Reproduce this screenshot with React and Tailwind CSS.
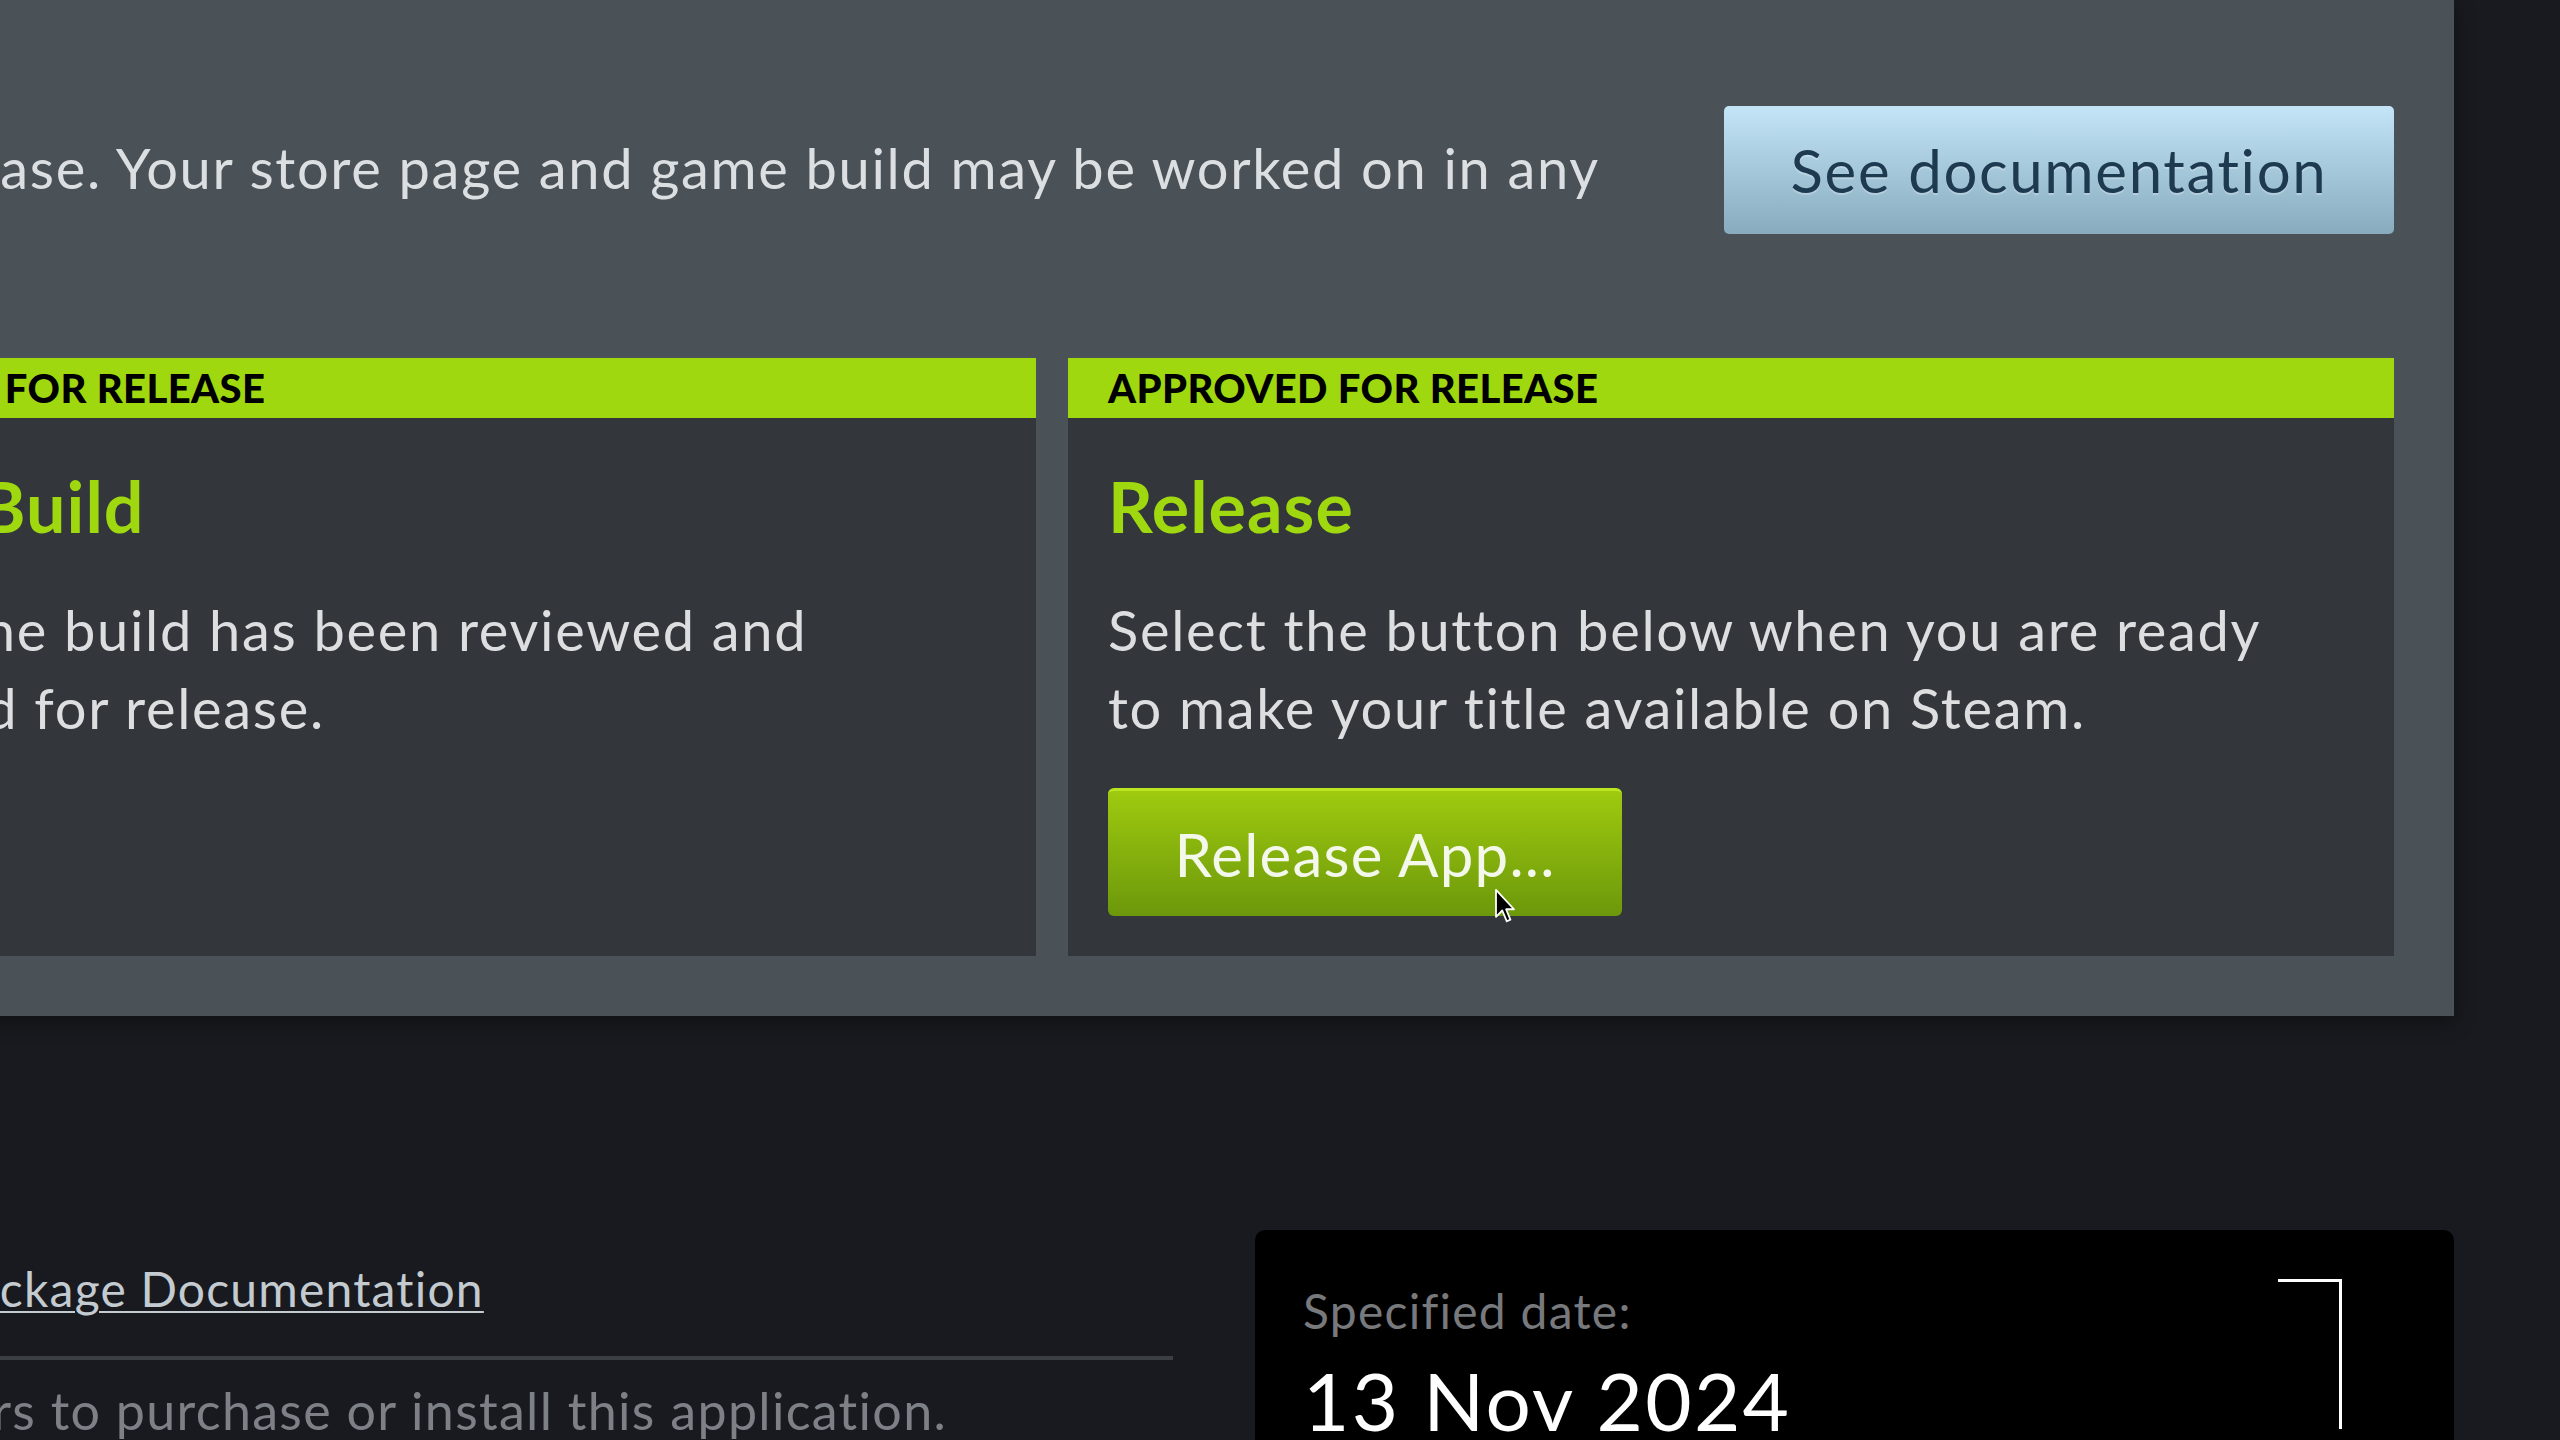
function Cursor() {
  return (
    <svg className="absolute left-[386px] top-[97px] w-[22px] h-[36px]" viewBox="0 0 12 20">
      <path d="M1 1 L1 16 L4.5 12.5 L7 18.5 L9 17.6 L6.6 11.8 L11 11.8 Z" fill="#000" stroke="#fff" strokeWidth="1" strokeLinejoin="round" />
    </svg>
  )
}

function StatusCard({ title, children, action }) {
  return (
    <div className="bg-[#33373b] flex flex-col">
      <div className="h-[60px] bg-[#9fd80f] px-[40px] flex items-center">
        <span className="text-[40px] leading-none font-black tracking-[0.01em] text-black">APPROVED FOR RELEASE</span>
      </div>
      <div className="px-[40px] pt-[46px] pb-[40px]">
        <h2 className="text-[70px] leading-[1.2] font-bold tracking-[0.015em] text-[#9fd80f]">{title}</h2>
        <p className="mt-[43px] max-w-[1180px] text-[56px] leading-[78px] tracking-[0.03em] text-[#dcdedf]">{children}</p>
        {action}
      </div>
    </div>
  )
}

export default function App() {
  return (
    <div className="w-[2560px] h-[1440px] overflow-hidden bg-[#181a1f] font-['Lato',sans-serif]">
      <div className="-ml-[325px] w-[2779px]">
        <section className="bg-[#4a5157] px-[60px] pt-[106px] pb-[60px] shadow-[0_6px_18px_rgba(0,0,0,0.35)]">
          <div className="flex items-start gap-[60px]">
            <p className="flex-1 pt-[23px] text-[56px] leading-[78px] tracking-[0.03em] text-[#dcdfe2]">
              Game release. Your store page and game build may be worked on in any order.
            </p>
            <button className="shrink-0 w-[670px] h-[128px] rounded-[5px] bg-linear-to-b from-[#c3e5f7] to-[#88abbe] text-[60px] tracking-[0.027em] text-[#1e3a50] [text-shadow:0_2px_0_rgba(255,255,255,0.25)]">
              See documentation
            </button>
          </div>

          <div className="mt-[73px] grid grid-cols-[1301px_1fr] gap-[32px]">
            <StatusCard title="Game Build">
              Your game build has been reviewed and approved for release.
            </StatusCard>
            <StatusCard
              title="Release"
              action={
                <button className="relative mt-[41px] w-[514px] h-[128px] rounded-[6px] border-t-[3px] border-[#b9e620] bg-linear-to-b from-[#9fca0f] to-[#6c980b] text-[60px] tracking-[0.02em] text-[#f3f8ea]">
                  Release App...
                  <Cursor />
                </button>
              }
            >
              Select the button below when you are ready to make your title available on Steam.
            </StatusCard>
          </div>
        </section>

        <section className="grid grid-cols-[1438px_1fr] gap-[82px] pl-[60px] pt-[214px]">
          <div className="pt-[26px]">
            <p className="text-[48px] leading-[66px] tracking-[0.025em] text-[#c3cad0]">
              View the <a href="#" className="underline decoration-2 underline-offset-[4px]">Package Documentation</a>
            </p>
            <div className="mt-[34px] h-[4px] bg-[#3b3e43]" />
            <p className="mt-[17px] text-[52px] leading-[66px] tracking-[0.025em] text-[#7d8187]">
              Allows users to purchase or install this application.
            </p>
          </div>
          <div className="h-[400px] rounded-t-[10px] bg-black flex items-start justify-between pl-[48px] pr-[112px] pt-[49px]">
            <div className="pt-[3px]">
              <p className="text-[48px] leading-[1.2] tracking-[0.026em] text-[#77797c]">Specified date:</p>
              <p className="mt-[12px] text-[80px] leading-[1.2] tracking-[0.029em] text-white">13 Nov 2024</p>
            </div>
            <div className="w-[64px] h-[150px] border-t-[3px] border-r-[3px] border-white" />
          </div>
        </section>
      </div>
    </div>
  )
}
